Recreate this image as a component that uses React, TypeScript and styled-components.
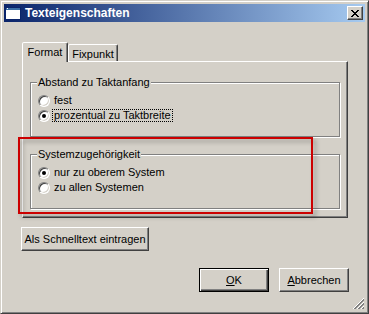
import React from "react";
import styled, { createGlobalStyle } from "styled-components";

const GlobalStyle = createGlobalStyle`
  html, body {
    margin: 0;
    padding: 0;
    background: #d4d0c8;
  }
  body {
    font-family: "Liberation Sans", Arial, sans-serif;
    font-size: 11px;
    color: #000;
  }
`;

const Window = styled.div`
  position: relative;
  box-sizing: border-box;
  width: 369px;
  height: 314px;
  padding: 3px;
  display: flex;
  flex-direction: column;
  background: #d4d0c8;
  border: 1px solid;
  border-color: #d4d0c8 #404040 #404040 #d4d0c8;
  box-shadow: inset 1px 1px 0 #fff, inset -1px -1px 0 #808080;
`;

const TitleBar = styled.div`
  height: 18px;
  display: flex;
  align-items: center;
  padding: 0 2px 0 1px;
  background: linear-gradient(to right, #0a246a, #a6caf0);
`;

const TitleText = styled.span`
  flex: 1;
  margin-left: 4px;
  color: #fff;
  font-weight: bold;
  font-size: 12px;
  line-height: 18px;
`;

const CloseButton = styled.div`
  box-sizing: border-box;
  width: 16px;
  height: 14px;
  background: #d4d0c8;
  border: 1px solid;
  border-color: #fff #404040 #404040 #fff;
  box-shadow: inset -1px -1px 0 #808080;
  display: flex;
  align-items: center;
  justify-content: center;
  padding-right: 1px;
`;

const Body = styled.div`
  flex: 1;
  min-height: 0;
  display: flex;
  flex-direction: column;
  padding: 20px 16px 0 17px;
`;

const TabControl = styled.div`
  margin-left: 1px;
  width: 326px;
  display: flex;
  flex-direction: column;
`;

const TabStrip = styled.div`
  height: 19px;
  display: flex;
  align-items: flex-end;
`;

const Tab = styled.div<{ $active?: boolean; $width: number }>`
  box-sizing: border-box;
  position: relative;
  z-index: ${(p) => (p.$active ? 1 : 0)};
  width: ${(p) => p.$width}px;
  height: ${(p) => (p.$active ? 20 : 17)}px;
  margin-bottom: ${(p) => (p.$active ? -1 : 0)}px;
  padding: ${(p) => (p.$active ? "0 0 2px" : "2px 0 0")};
  display: flex;
  align-items: center;
  justify-content: center;
  background: #d4d0c8;
  border: 1px solid;
  border-bottom: none;
  border-color: #fff #404040 transparent #fff;
  border-radius: 2px 2px 0 0;
  box-shadow: inset -1px 0 0 #808080;
`;

const Panel = styled.div`
  box-sizing: border-box;
  height: 157px;
  padding: 20px 7px 0;
  display: flex;
  flex-direction: column;
  border: 1px solid;
  border-color: #fff #404040 #404040 #fff;
  box-shadow: inset -1px -1px 0 #808080;
`;

const Group = styled.div<{ $gap?: number }>`
  box-sizing: border-box;
  margin-top: ${(p) => p.$gap ?? 0}px;
  border: 1px solid #808080;
  box-shadow: inset 1px 1px 0 #fff, 1px 1px 0 #fff;
  padding-bottom: 13px;
`;

const Legend = styled.div`
  width: fit-content;
  margin: -7px 0 0 6px;
  padding: 0 1px;
  line-height: 13px;
  background: #d4d0c8;
`;

const Options = styled.div`
  margin-top: 4px;
  display: flex;
  flex-direction: column;
`;

const OptionRow = styled.div`
  height: 15px;
  display: flex;
  align-items: center;
  padding-left: 7px;
`;

const Radio = styled.span<{ $checked?: boolean }>`
  box-sizing: border-box;
  width: 12px;
  height: 12px;
  flex: none;
  border-radius: 50%;
  background: #fff;
  border: 1px solid;
  border-color: #808080 #fff #fff #808080;
  box-shadow: inset 1px 1px 0 #404040, inset -1px -1px 0 #d4d0c8;
  display: flex;
  align-items: center;
  justify-content: center;
  &::after {
    content: "";
    display: ${(p) => (p.$checked ? "block" : "none")};
    width: 4px;
    height: 4px;
    border-radius: 50%;
    background: #000;
  }
`;

const OptionLabel = styled.span<{ $focused?: boolean }>`
  margin-left: 2px;
  padding: 0 1px;
  line-height: 11px;
  border: 1px dotted ${(p) => (p.$focused ? "#000" : "transparent")};
`;

const Button = styled.button<{ $default?: boolean; $width: number }>`
  box-sizing: border-box;
  width: ${(p) => p.$width}px;
  height: 24px;
  padding: 0;
  font: inherit;
  color: #000;
  background: #d4d0c8;
  border: 1px solid;
  border-color: ${(p) => (p.$default ? "#000" : "#fff #404040 #404040 #fff")};
  box-shadow: ${(p) =>
    p.$default
      ? "inset 1px 1px 0 #fff, inset -1px -1px 0 #404040, inset -2px -2px 0 #808080"
      : "inset -1px -1px 0 #808080"};
  u {
    text-decoration: underline;
  }
`;

const QuickTextButton = styled(Button)`
  align-self: flex-start;
  margin-top: 9px;
`;

const Footer = styled.div`
  margin-top: 17px;
  display: flex;
  justify-content: flex-end;
  gap: 10px;
`;

const GripRow = styled.div`
  height: 13px;
  display: flex;
  justify-content: flex-end;
`;

const Highlight = styled.div`
  position: absolute;
  left: 17px;
  top: 136px;
  width: 295px;
  height: 77px;
  box-sizing: border-box;
  border: 2px solid #cc0000;
  filter: drop-shadow(3px 3px 2px rgba(0, 0, 0, 0.3));
  pointer-events: none;
`;

const WindowIcon = () => (
  <svg width="16" height="13" viewBox="0 0 16 13" shapeRendering="crispEdges">
    <rect x="0" y="0" width="16" height="13" fill="#0a246a" />
    <rect x="1" y="1" width="14" height="2" fill="#3a6ea5" />
    <rect x="1" y="3" width="14" height="9" fill="#fff" />
    <rect x="2" y="1" width="1" height="1" fill="#fff" />
  </svg>
);

const CloseGlyph = () => (
  <svg width="8" height="7" viewBox="0 0 8 7" shapeRendering="crispEdges">
    <path
      d="M0 0h2v1H0z M6 0h2v1H6z M1 1h2v1H1z M5 1h2v1H5z M2 2h4v1H2z M3 3h2v1H3z M2 4h4v1H2z M1 5h2v1H1z M5 5h2v1H5z M0 6h2v1H0z M6 6h2v1H6z"
      fill="#000"
    />
  </svg>
);

const SizeGrip = () => (
  <svg width="13" height="13" viewBox="0 0 13 13">
    <path d="M12 1L1 12" stroke="#fff" strokeWidth="1" />
    <path d="M12 2L2 12 M12 3L3 12" stroke="#808080" strokeWidth="1" />
    <path d="M12 5L5 12" stroke="#fff" strokeWidth="1" />
    <path d="M12 6L6 12 M12 7L7 12" stroke="#808080" strokeWidth="1" />
    <path d="M12 9L9 12" stroke="#fff" strokeWidth="1" />
    <path d="M12 10L10 12 M12 11L11 12" stroke="#808080" strokeWidth="1" />
  </svg>
);

const groups = [
  {
    title: "Abstand zu Taktanfang",
    gap: 0,
    options: [
      { label: "fest", checked: false, focused: false },
      { label: "prozentual zu Taktbreite", checked: true, focused: true },
    ],
  },
  {
    title: "Systemzugehörigkeit",
    gap: 17,
    options: [
      { label: "nur zu oberem System", checked: true, focused: false },
      { label: "zu allen Systemen", checked: false, focused: false },
    ],
  },
];

const App = () => {
  return (
    <>
      <GlobalStyle />
      <Window>
        <TitleBar>
          <WindowIcon />
          <TitleText>Texteigenschaften</TitleText>
          <CloseButton>
            <CloseGlyph />
          </CloseButton>
        </TitleBar>
        <Body>
          <TabControl>
            <TabStrip>
              <Tab $active $width={46}>Format</Tab>
              <Tab $width={50}>Fixpunkt</Tab>
            </TabStrip>
            <Panel>
              {groups.map((g) => (
                <Group key={g.title} $gap={g.gap}>
                  <Legend>{g.title}</Legend>
                  <Options>
                    {g.options.map((o) => (
                      <OptionRow key={o.label}>
                        <Radio $checked={o.checked} />
                        <OptionLabel $focused={o.focused}>{o.label}</OptionLabel>
                      </OptionRow>
                    ))}
                  </Options>
                </Group>
              ))}
            </Panel>
          </TabControl>
          <QuickTextButton $width={128}>Als Schnelltext eintragen</QuickTextButton>
          <Footer>
            <Button $default $width={70}>
              <u>O</u>K
            </Button>
            <Button $width={70}>
              <u>A</u>bbrechen
            </Button>
          </Footer>
        </Body>
        <GripRow>
          <SizeGrip />
        </GripRow>
        <Highlight />
      </Window>
    </>
  );
};

export default App;
